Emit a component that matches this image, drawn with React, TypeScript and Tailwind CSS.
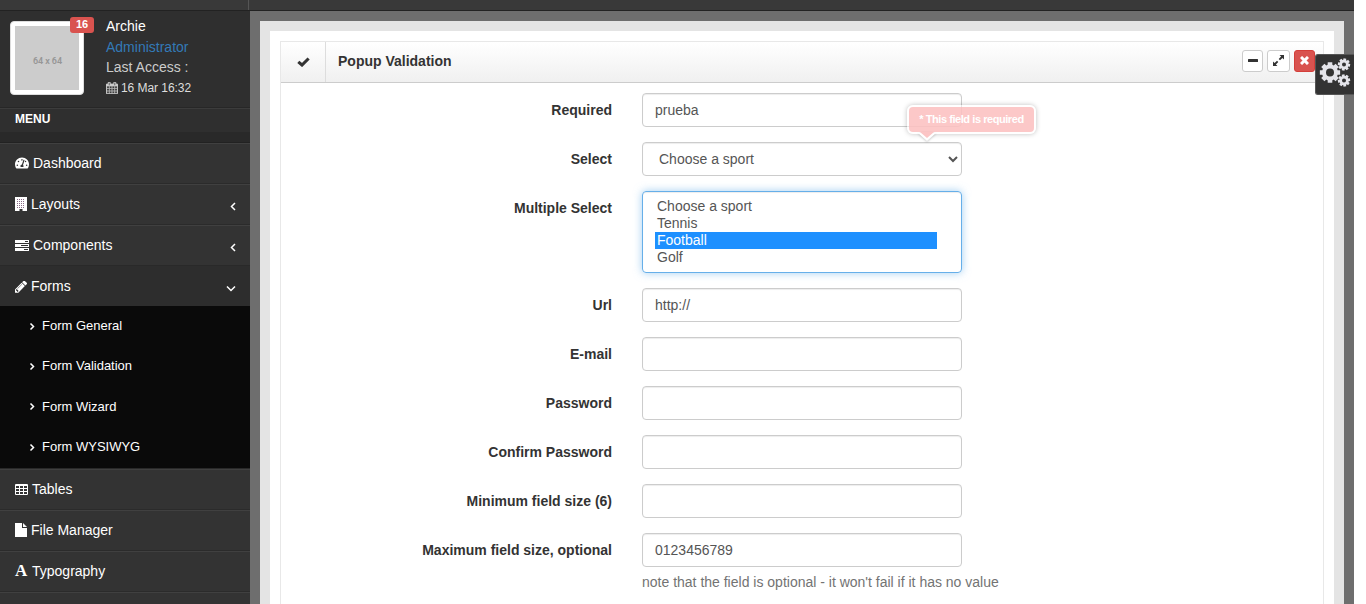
import type { ReactNode } from "react";
import { FaTachometerAlt } from "react-icons/fa";

const CALENDAR =
  "M192 1664h288v-288h-288v288zm352 0h320v-288h-320v288zm-352-352h288v-320h-288v320zm352 0h320v-320h-320v320zm-352-384h288v-288h-288v288zm736 736h320v-288h-320v288zm-384-736h320v-288h-320v288zm768 736h288v-288h-288v288zm-384-352h320v-320h-320v320zm-352-864v-288q0-13-9.500-22.500t-22.500-9.500h-64q-13 0-22.500 9.500t-9.500 22.500v288q0 13 9.500 22.500t22.500 9.500h64q13 0 22.500-9.500t9.500-22.500zm736 864h288v-320h-288v320zm-384-384h320v-288h-320v288zm384 0h288v-288h-288v288zm32-480v-288q0-13-9.500-22.500t-22.500-9.500h-64q-13 0-22.500 9.500t-9.500 22.500v288q0 13 9.500 22.500t22.500 9.500h64q13 0 22.500-9.500t9.500-22.500zm384-64v1280q0 52-38 90t-90 38h-1408q-52 0-90-38t-38-90v-1280q0-52 38-90t90-38h128v-96q0-66 47-113t113-47h64q66 0 113 47t47 113v96h384v-96q0-66 47-113t113-47h64q66 0 113 47t47 113v96h128q52 0 90 38t38 90z";
const PENCIL =
  "M491 1536l91-91-235-235-91 91v107h128v128h107zm523-928q0-22-22-22-10 0-17 7l-542 542q-7 7-7 17 0 22 22 22 10 0 17-7l542-542q7-7 7-17zm-54-192l416 416-832 832h-416v-416zm683 96q0 53-37 90l-166 166-416-416 166-165q36-38 90-38 53 0 91 38l235 234q37 39 37 91z";

function gear(cx: number, cy: number, outer: number, root: number, hole: number, turn: number) {
  const points: string[] = [];
  for (let i = 0; i < 8; i++) {
    const a = (i * Math.PI) / 4 + turn;
    for (const [r, da] of [[root, -0.3], [outer, -0.22], [outer, 0.22], [root, 0.3]]) {
      points.push(`${(cx + r * Math.cos(a + da)).toFixed(2)} ${(cy + r * Math.sin(a + da)).toFixed(2)}`);
    }
  }
  return `M${points.join("L")}ZM${cx - hole} ${cy}a${hole} ${hole} 0 1 0 ${2 * hole} 0a${hole} ${hole} 0 1 0 ${-2 * hole} 0Z`;
}

function GearsIcon() {
  return (
    <svg width="32" height="32" fill="currentColor" fillRule="evenodd">
      <path d={gear(11, 16.500, 10.4, 8, 4, 0)} />
      <path d={gear(25, 8.500, 6.3, 4.7, 2, 0.15)} />
      <path d={gear(25, 24.500, 6.3, 4.7, 2, -0.15)} />
    </svg>
  );
}

function BuildingIcon() {
  return (
    <svg width="12" height="14" viewBox="0 0 12 14" fill="currentColor">
      <path d="M0 0h12v14H7.500v-2h-3v2H0z" />
      <path
        d="M2 2.500h8M2 4.500h8M2 6.500h8M2 8.500h8M2 10.500h8"
        stroke="#8a6a86"
        strokeWidth="1"
        strokeDasharray="1 1"
      />
    </svg>
  );
}

function TasksIcon() {
  return (
    <svg width="14" height="11" viewBox="0 0 14 11" fill="currentColor">
      <path fillRule="evenodd" d="M0 0h14v3H0zM10 1v1h3V1zM0 4h14v3H0zM6 5v1h7V5zM0 8h14v3H0zM9 9v1h4V9z" />
    </svg>
  );
}

function TableIcon() {
  return (
    <svg width="13" height="11" viewBox="0 0 13 11" fill="currentColor">
      <path
        fillRule="evenodd"
        d="M1 0h11a1 1 0 0 1 1 1v9a1 1 0 0 1-1 1H1a1 1 0 0 1-1-1V1a1 1 0 0 1 1-1zM1 2v2h3V2zM5 2v2h3V2zM9 2v2h3V2zM1 5v2h3V5zM5 5v2h3V5zM9 5v2h3V5zM1 8v2h3V8zM5 8v2h3V8zM9 8v2h3V8z"
      />
    </svg>
  );
}

function Angle({ dir }: { dir: "left" | "right" | "down" }) {
  const d = dir === "left" ? "M5 1 1.500 4.500 5 8" : dir === "right" ? "M1.500 1.500l3 3-3 3" : "M1 1.500 5 5.500 9 1.500";
  return (
    <svg width={dir === "down" ? 10 : 6} height={dir === "down" ? 7 : 9} fill="none" stroke="currentColor" strokeWidth="1.5" className="block">
      <path d={d} />
    </svg>
  );
}

function MenuItem({ icon, label, arrow, active }: { icon: ReactNode; label: string; arrow?: "left" | "down"; active?: boolean }) {
  return (
    <li
      className={
        active
          ? "-mt-px flex h-[41px] items-center border-t border-[#292929] bg-[#2d2d2d] pt-px pr-[14px] pl-[15px]"
          : "flex h-[41px] items-center border-t border-[#404040] bg-[#333] pr-[14px] pb-[2px] pl-[15px] shadow-[inset_0_-1px_0_#2b2b2b]"
      }
    >
      <span className="mr-1 flex shrink-0">{icon}</span>
      <span className="-mt-px leading-5">{label}</span>
      {arrow && (
        <span className={active ? "mt-[3px] ml-auto" : "mt-[5px] ml-auto"}>
          <Angle dir={arrow} />
        </span>
      )}
    </li>
  );
}

function Sidebar() {
  return (
    <aside className="h-[593px] w-[250px] shrink-0 overflow-hidden bg-[#2f2f2f] text-white">
      <div className="flex h-24 pt-[10px] pl-[10px]">
        <div className="relative h-[74px] w-[74px] rounded border border-[#ddd] bg-white p-1">
          <div className="flex h-16 w-16 items-center justify-center bg-[#ccc]">
            <span className="mt-[5px] ml-px [font-family:Roboto,sans-serif] text-[9px] leading-4 font-semibold tracking-[-0.1px] whitespace-nowrap text-[#969696]">
              64 x 64
            </span>
          </div>
          <span className="absolute -top-[5px] left-[59px] h-4 w-6 rounded-[3px] bg-[#d9534f] text-center text-[11px] leading-[15px] font-bold">16</span>
        </div>
        <div className="-mt-[5px] ml-[22px] leading-5">
          <div>Archie</div>
          <div className="mt-[1px] text-[#337ab7]">Administrator</div>
          <div className="text-[#ccc]">Last Access :</div>
          <div className="mt-px flex items-center text-[12px] text-[#ddd]">
            <svg width="12" height="12" viewBox="64 0 1664 1792" preserveAspectRatio="none" fill="#ccc" stroke="#ccc" strokeWidth="40" className="mr-[3px]">
              <path d={CALENDAR} />
            </svg>
            <span className="tracking-[-0.05px]">16 Mar 16:32</span>
          </div>
        </div>
      </div>
      <div className="h-[25px] border-t border-[#272727] bg-[#2f2f2f] pl-[15px] text-[12px] leading-[22px] font-bold shadow-[inset_0_1px_0_#3c3c3c]">MENU</div>
      <div className="h-[11px] border-b border-[#222] bg-[#292929]" />
      <ul>
        <MenuItem icon={<FaTachometerAlt size={14} />} label="Dashboard" />
        <MenuItem icon={<BuildingIcon />} label="Layouts" arrow="left" />
        <MenuItem icon={<TasksIcon />} label="Components" arrow="left" />
        <MenuItem
          active
          icon={
            <svg width="12" height="12" viewBox="128 224 1515 1440" fill="currentColor">
              <path d={PENCIL} />
            </svg>
          }
          label="Forms"
          arrow="down"
        />
      </ul>
      <ul className="h-[162px] bg-[#0a0a0a] text-[13px]">
        {["Form General", "Form Validation", "Form Wizard", "Form WYSIWYG"].map((t) => (
          <li key={t} className="flex h-[40.4px] items-center pl-[29px]">
            <span className="mr-[7px]">
              <Angle dir="right" />
            </span>
            <span className="-mt-[0.2px]">{t}</span>
          </li>
        ))}
      </ul>
      <ul className="border-t border-[#292929]">
        <MenuItem icon={<TableIcon />} label="Tables" />
        <MenuItem
          icon={
            <svg width="12" height="14" fill="currentColor">
              <path d="M0 0h7v5h5v9H0zM8 0l4 4H8z" />
            </svg>
          }
          label="File Manager"
        />
        <MenuItem icon={<span className="w-[13px] [font-family:'Liberation_Serif',serif] text-[17px] leading-4 font-bold">A</span>} label="Typography" />
        <MenuItem icon={null} label="" />
      </ul>
    </aside>
  );
}

const FIELD =
  "block h-[34px] w-80 rounded border border-[#ccc] bg-white px-3 text-sm text-[#555] shadow-[inset_0_1px_1px_rgba(0,0,0,0.075)] outline-none";

function Row({ label, children }: { label: string; children: ReactNode }) {
  return (
    <div className="flex items-start">
      <label className="w-[331px] shrink-0 pt-[7px] text-right leading-5 font-bold">{label}</label>
      <div className="relative ml-[30px]">{children}</div>
    </div>
  );
}

function RequiredBubble() {
  return (
    <div className="absolute top-[-37px] left-[265px] z-10">
      <div className="h-[29px] w-[129px] rounded-md bg-white/50 p-[2px] shadow-[0_0_5px_rgba(0,0,0,0.25)]">
        <div className="flex h-[25px] justify-center rounded bg-[#fbb5b5]/75 text-[11px] leading-[24px] font-bold tracking-[-0.44px] whitespace-nowrap text-white">
          * This field is required
        </div>
      </div>
      <svg width="18" height="9" className="-mt-[2px] ml-[11px] block drop-shadow-[0_1px_1px_rgba(0,0,0,0.2)]">
        <path d="M0 1h18L9 9z" fill="#fff" />
        <path d="M2 0h14L9 6z" fill="#fcc5c5" />
      </svg>
    </div>
  );
}

function ValidationForm() {
  return (
    <form className="flex flex-col gap-[15px] pt-[10px]">
      <Row label="Required">
        <input className={FIELD} defaultValue="prueba" />
      </Row>
      <Row label="Select">
        <select className={FIELD} defaultValue="">
          <option value="">Choose a sport</option>
          <option>Tennis</option>
          <option>Football</option>
          <option>Golf</option>
        </select>
        <RequiredBubble />
      </Row>
      <Row label="Multiple Select">
        <div
          role="listbox"
          className="h-[82px] w-80 rounded border border-[#66afe9] px-3 py-[6px] leading-[17px] text-[#555] shadow-[inset_0_1px_1px_rgba(0,0,0,0.075),0_0_8px_rgba(102,175,233,0.6)]"
        >
          <div className="w-[282px] px-[2px]">Choose a sport</div>
          <div className="w-[282px] px-[2px]">Tennis</div>
          <div className="w-[282px] bg-[#1e90ff] px-[2px] text-white">Football</div>
          <div className="w-[282px] px-[2px]">Golf</div>
        </div>
      </Row>
      <Row label="Url">
        <input className={FIELD} defaultValue="http://" />
      </Row>
      <Row label="E-mail">
        <input className={FIELD} />
      </Row>
      <Row label="Password">
        <input type="password" className={FIELD} />
      </Row>
      <Row label="Confirm Password">
        <input type="password" className={FIELD} />
      </Row>
      <Row label="Minimum field size (6)">
        <input className={FIELD} />
      </Row>
      <Row label="Maximum field size, optional">
        <input className={FIELD} defaultValue="0123456789" />
        <p className="mt-[5px] leading-5 whitespace-nowrap text-[#737373]">note that the field is optional - it won't fail if it has no value</p>
      </Row>
    </form>
  );
}

function PanelHeader() {
  return (
    <header className="flex h-[41px] items-center border-b border-[#ccc] bg-linear-to-b from-white to-[#f0f0f0] pr-2">
      <div className="flex h-10 w-[45px] items-center justify-center border-r border-[#ddd]">
        <svg width="13" height="10" viewBox="0 0 13 10">
          <path d="M1.300 4.800 5 8 11.600 1.500" fill="none" stroke="#333" strokeWidth="3.100" />
        </svg>
      </div>
      <h5 className="-mt-[3px] ml-3 leading-5 font-bold">Popup Validation</h5>
      <div className="ml-auto flex gap-1 pb-[3px]">
        <button className="flex h-[22px] w-[21px] items-center justify-center rounded-[3px] border border-[#ccc] bg-white">
          <svg width="10" height="3" className="-mt-px">
            <rect width="10" height="3" rx=".5" fill="#333" />
          </svg>
        </button>
        <button className="flex h-[22px] w-[23px] items-center justify-center rounded-[3px] border border-[#ccc] bg-white">
          <svg width="11" height="11" viewBox="0 0 11 11" fill="#333">
            <path d="M6.500 0H11v4.500L9.400 2.900 7 5.300 5.700 4 8.100 1.600zM4.500 11H0V6.500l1.600 1.600L4 5.700 5.300 7 2.900 9.400z" />
          </svg>
        </button>
        <button className="flex h-[22px] w-[21px] items-center justify-center rounded-[3px] border border-[#d43f3a] bg-[#d9534f]">
          <svg width="9" height="9" viewBox="0 0 9 9">
            <path d="M1 1l7 7M8 1 1 8" stroke="#fff" strokeWidth="3" />
          </svg>
        </button>
      </div>
    </header>
  );
}

export default function App() {
  return (
    <div className="h-[604px] w-[1366px] overflow-hidden bg-white [font-family:'Liberation_Sans',Arial,sans-serif] text-sm text-[#333]">
      <div className="relative h-[604px] w-[1354px] overflow-hidden bg-[#6e6e6e]">
        <div className="flex h-[11px] border-b border-[#222] bg-[#393939]">
          <div className="w-[249px] border-r border-[#555]" />
        </div>
        <div className="flex h-[593px]">
          <Sidebar />
          <main className="mt-[10px] mr-[10px] ml-[10px] h-[593px] flex-1 bg-[#e4e4e4] px-[10px] pt-[10px]">
            <div className="h-[583px] bg-white px-[10px] pt-[10px]">
              <section className="h-[583px] border border-b-0 border-[#e8e8e8]">
                <PanelHeader />
                <ValidationForm />
              </section>
            </div>
          </main>
        </div>
        <button className="absolute top-[54px] right-0 flex h-[41px] w-[39px] items-start rounded-l-[3px] border border-r-0 border-[#555] bg-[#333] pt-px pl-[3px] text-[#e4e4ea]">
          <GearsIcon />
        </button>
      </div>
    </div>
  );
}
